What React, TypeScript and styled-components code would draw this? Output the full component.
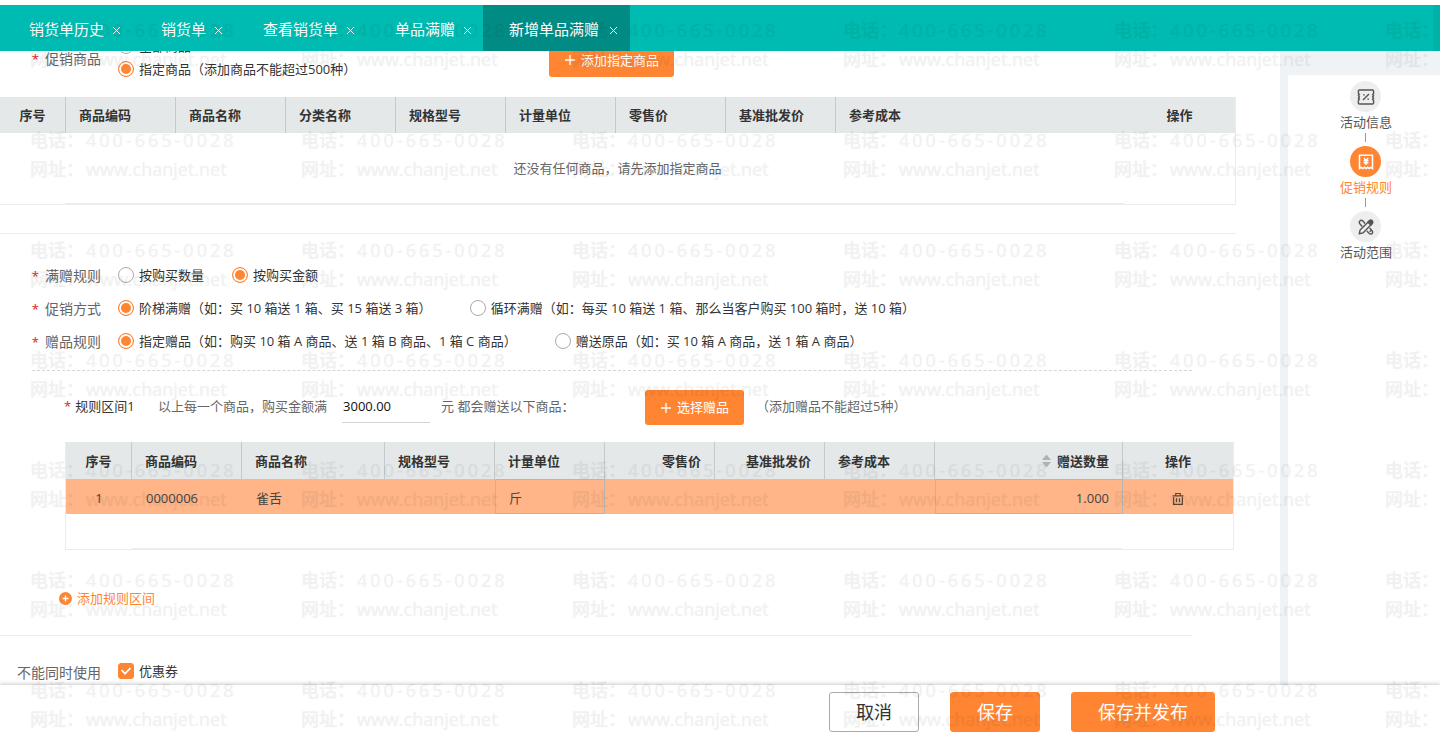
import React, { useState } from 'react';
import styled, { createGlobalStyle, css } from 'styled-components';

const GlobalStyle = createGlobalStyle`
  *, *::before, *::after { box-sizing: border-box; }
  body {
    margin: 0;
    background: #fff;
    color: #333;
    font: 13px/20px "Open Sans", "Noto Sans CJK SC", sans-serif;
  }
  button, input { font: inherit; color: inherit; }
  button { padding: 0; border: 0; background: none; cursor: pointer; }
`;

const orange = '#ff8533';
const line = '#ececec';

const Page = styled.div`
  position: relative;
  display: flex;
  flex-direction: column;
  height: 100vh;
  padding-top: 5px;
  overflow: hidden;
`;

const TabBar = styled.nav`
  display: flex;
  flex: none;
  height: 46px;
  background: #00bbb1;
  border-right: 7px solid #00b1a7;
`;

const Tab = styled.div<{ $active?: boolean }>`
  display: flex;
  align-items: center;
  gap: 8px;
  padding: 2px 11px 0 25px;
  margin-left: 4px;
  color: #fff;
  ${(p) => p.$active && css`
    gap: 10px;
    padding: 2px 12px 0 26px;
    background: #008c84;
    margin-left: 0;
  `}
`;

const TabLink = styled.a`
  color: inherit;
  font-size: 15px;
  text-decoration: none;
  white-space: nowrap;
`;

const CloseButton = styled.button`
  display: flex;
  padding-top: 2px;
`;

const Body = styled.div`
  display: flex;
  flex: 1;
  min-height: 0;
  background: #eff3f6;
`;

const Main = styled.main`
  flex: 1;
  min-width: 0;
  padding-right: 44px;
  margin-right: 8px;
  background: #fff;
  overflow: hidden;
`;

const Side = styled.aside`
  display: flex;
  flex-direction: column;
  align-items: center;
  flex: none;
  width: 152px;
  margin-top: 24px;
  padding: 6px 0 0 4px;
  background: #fff;
`;

const Step = styled.a<{ $active?: boolean }>`
  display: flex;
  flex-direction: column;
  align-items: center;
  color: ${(p) => (p.$active ? orange : '#555')};
  text-decoration: none;
  &:not(:first-child)::before {
    content: '';
    width: 1px;
    height: 9px;
    margin: 1px 0 4px;
    background: #999;
  }
`;

const StepIcon = styled.span<{ $active?: boolean }>`
  display: grid;
  place-items: center;
  width: 31px;
  height: 31px;
  border-radius: 50%;
  background: ${(p) => (p.$active ? orange : '#eee')};
  color: ${(p) => (p.$active ? '#fff' : '#555')};
`;

const AddButton = styled.button<{ $wide?: boolean }>`
  display: flex;
  align-items: center;
  justify-content: center;
  gap: 5px;
  flex: none;
  width: ${(p) => (p.$wide ? 125 : 99)}px;
  height: 35px;
  border-radius: 3px;
  background: ${orange};
  color: #fff;
`;

const GoodsRow = styled.div`
  display: flex;
  align-items: flex-start;
  margin-top: -15px;
  height: 61px;
  ${AddButton} { margin-top: 6px; }
`;

const GoodsOptions = styled.div`
  display: flex;
  flex-direction: column;
  gap: 3px;
  width: 431px;
`;

const FieldName = styled.div<{ $top?: number }>`
  flex: none;
  width: 118px;
  padding-right: 17px;
  padding-top: ${(p) => p.$top ?? 0}px;
  color: #666;
  font-size: 14px;
  text-align: right;
  white-space: nowrap;
`;

const Star = styled.span`
  margin-right: 6px;
  color: #e02020;
  font-size: 13px;
`;

const Field = styled.div`
  display: flex;
  align-items: flex-start;
  height: 33px;
`;

const Option = styled.label<{ $gap?: number }>`
  display: flex;
  align-items: center;
  gap: 5px;
  height: 20px;
  margin-right: ${(p) => p.$gap ?? 28}px;
  white-space: nowrap;
`;

const Radio = styled.input.attrs({ type: 'radio' })`
  appearance: none;
  flex: none;
  width: 16px;
  height: 16px;
  margin: 0;
  border: 1px solid #aaa;
  border-radius: 50%;
  background: #fff;
  &:checked {
    border-color: ${orange};
    background: ${orange};
    box-shadow: inset 0 0 0 2px #fff;
  }
`;

const CheckWrap = styled.span`
  display: grid;
  place-items: center;
  width: 16px;
  height: 16px;
  & > * { grid-area: 1 / 1; }
  svg { pointer-events: none; }
`;

const Checkbox = styled.input.attrs({ type: 'checkbox' })`
  appearance: none;
  width: 16px;
  height: 16px;
  margin: 0;
  border: 1px solid #aaa;
  border-radius: 3px;
  &:checked { border-color: ${orange}; background: ${orange}; }
`;

const Table = styled.table`
  width: 100%;
  table-layout: fixed;
  border-collapse: separate;
  border-spacing: 0;
  border: solid ${line};
  border-width: 0 1px 1px 0;
`;

const HeadCell = styled.th<{ $align?: string; $plain?: boolean }>`
  height: 36px;
  padding: 0 13px;
  background: #e4e8e9;
  border-right: ${(p) => (p.$plain ? 0 : '1px solid #c4c9cb')};
  font-weight: 700;
  text-align: ${(p) => p.$align ?? 'left'};
  white-space: nowrap;
`;

const EmptyCell = styled.td<{ $height: number; $left: number }>`
  height: ${(p) => p.$height}px;
  padding: 0;
  color: #666;
  text-align: center;
  vertical-align: bottom;
  &::after {
    content: '';
    display: block;
    height: 1px;
    margin: 0 111px 0 ${(p) => p.$left}px;
    background: ${line};
  }
`;

const EmptyText = styled.p`
  margin: 0 0 25px;
`;

const GiftCell = styled.td<{ $align?: string; $boxed?: boolean }>`
  height: 35px;
  padding: 2px 14px 0;
  background: #ffb588;
  color: #444;
  text-align: ${(p) => p.$align ?? 'left'};
  ${(p) => p.$boxed && css`box-shadow: inset 0 0 0 1px #b9b4b0;`}
`;

const SortLabel = styled.span`
  display: inline-flex;
  align-items: center;
  gap: 6px;
  vertical-align: top;
`;

const IconButton = styled.button`
  display: inline-flex;
  vertical-align: middle;
`;

const Divider = styled.hr<{ $short?: boolean; $top?: number }>`
  height: 1px;
  margin: ${(p) => p.$top ?? 0}px ${(p) => (p.$short ? 44 : 0)}px 0 0;
  border: 0;
  background: ${line};
`;

const Section = styled.section`
  padding: 31px 0 0;
`;

const RuleBlock = styled.div`
  margin: 6px 44px 0 32px;
  border-top: 1px dashed #d5d5d5;
`;

const RuleLine = styled.div`
  display: flex;
  align-items: flex-start;
  height: 35px;
  margin: 19px 0 17px 32px;
  color: #666;
  line-height: 33px;
  white-space: nowrap;
`;

const RuleName = styled.span`
  width: 94px;
  color: #333;
  ${Star} { margin-right: 4px; }
`;

const AmountInput = styled.input`
  width: 88px;
  height: 33px;
  margin: 0 11px 0 15px;
  padding: 0 1px;
  border: 0;
  border-bottom: 1px solid #d5d5d5;
  background: none;
  color: #111;
`;

const Unit = styled.span`
  width: 204px;
`;

const Note = styled.span`
  margin-left: 12px;
`;

const GiftTable = styled.div`
  margin: 0 2px 0 65px;
  ${Table} { border-left-width: 1px; }
  ${HeadCell} { height: 37px; }
`;

const AddRule = styled.button`
  display: flex;
  align-items: center;
  gap: 5px;
  margin: 38px 0 27px 59px;
  color: ${orange};
`;

const Exclusive = styled(Field)`
  padding-top: 25px;
`;

const Footer = styled.footer`
  display: flex;
  justify-content: flex-end;
  gap: 31px;
  flex: none;
  height: 51px;
  padding: 7px 225px 0 0;
  background: #fff;
  box-shadow: 0 -1px 4px rgba(0, 0, 0, 0.22);
  z-index: 1;
`;

const ActionButton = styled.button<{ $primary?: boolean }>`
  height: 40px;
  padding: 0 26px;
  border: 1px solid ${(p) => (p.$primary ? orange : '#aaa')};
  border-radius: 3px;
  background: ${(p) => (p.$primary ? orange : '#fff')};
  color: ${(p) => (p.$primary ? '#fff' : '#333')};
  font-size: 18px;
`;

const Watermark = styled.div`
  position: absolute;
  inset: 0;
  z-index: 2;
  display: grid;
  grid-template-columns: repeat(auto-fill, 271px);
  grid-auto-rows: 110px;
  width: calc(100% + 271px);
  padding: 16px 0 0 30px;
  color: #000;
  opacity: 0.05;
  text-shadow: 0 0 1px #000;
  font-size: 18px;
  line-height: 29px;
  font-weight: 500;
  white-space: nowrap;
  pointer-events: none;
  user-select: none;
`;

const ContactLine = styled.div<{ $spaced?: boolean }>`
  display: flex;
  gap: 2px;
  span:last-child { letter-spacing: ${(p) => (p.$spaced ? 3 : 0)}px; }
`;

const Close = () => (
  <svg width="9" height="9" viewBox="0 0 9 9" fill="none" stroke="#fff" strokeWidth="1">
    <path d="M1 1l7 7M8 1L1 8" />
  </svg>
);

const Plus = () => (
  <svg width="12" height="12" viewBox="0 0 12 12" fill="none" stroke="#fff" strokeWidth="1.3">
    <path d="M6 1v10M1 6h10" />
  </svg>
);

const TicketIcon = () => (
  <svg width="18" height="16" viewBox="0 0 18 16" fill="none" stroke="currentColor" strokeWidth="1.4">
    <path d="M2.4 1h13.2q1 0 1 1v2.6l-1 1 1 1.2-1 1.2 1 1.2-1 1.2 1 1V14q0 1-1 1H2.4q-1 0-1-1v-2.8l1-1-1-1.2 1-1.2-1-1.2 1-1.2-1-1V2q0-1 1-1z" />
    <path d="M6 11l6-6" />
    <path d="M6.2 5.2h1.6v1.4H6.2zM10.4 9.4h1.6v1.4h-1.6z" fill="currentColor" stroke="none" />
  </svg>
);

const ReceiptIcon = () => (
  <svg width="16" height="16" viewBox="0 0 16 16" fill="none" stroke="currentColor" strokeWidth="1.5">
    <path d="M1.5 14.5V1.2h13v13.3l-1.6-1.2-1.6 1.2-1.7-1.2L8 14.5l-1.6-1.2-1.7 1.2-1.6-1.2z" />
    <path d="M5.8 4L8 6.4 10.2 4M8 6.4V11M5.6 6.8h4.8M5.6 8.8h4.8" strokeWidth="1.4" />
  </svg>
);

const ToolsIcon = () => (
  <svg width="16" height="16" viewBox="0 0 16 16" fill="none" stroke="currentColor" strokeWidth="1.4" strokeLinejoin="round">
    <path d="M1.2 14.8l.9-3.7L11.4 1.8l2.9 2.8-9.3 9.3z" />
    <path d="M10 3.2L11.7 1.4q1.3-.9 2.5.3 1.1 1.3.3 2.5L12.8 6z" fill="currentColor" />
    <path d="M7 4.6L5 2Q3.2.6 1.8 2 .6 3.4 2 5l2.2 2.5M11.6 9.1l2.6 2.8q1 1.6-.2 2.7-1.5 1-2.7-.1l-2.5-2.6M12.9 11.5l-1.2 1.2" />
  </svg>
);

const TrashIcon = () => (
  <svg width="12" height="14" viewBox="0 0 12 14" fill="none" stroke="#5c4638" strokeWidth="1.2">
    <path d="M.5 3.8h11M3.7 3.6V1.5h4.6v2.1M1.6 5v7.4h8.8V5M4.5 6.3v4M7.5 6.3v4" />
  </svg>
);

const SortIcon = () => (
  <svg width="9" height="14" viewBox="0 0 9 14" fill="#aeb2b3">
    <path d="M0 6l4.5-5.5L9 6zM0 8h9l-4.5 5.5z" />
  </svg>
);

const AddCircle = () => (
  <svg width="13" height="13" viewBox="0 0 13 13">
    <circle cx="6.5" cy="6.5" r="6.5" fill={orange} />
    <path d="M6.5 3.5v6M3.5 6.5h6" stroke="#fff" strokeWidth="1.3" />
  </svg>
);

const Tick = () => (
  <svg width="12" height="12" viewBox="0 0 12 12" fill="none" stroke="#fff" strokeWidth="1.8">
    <path d="M1.5 5l3.5 3.7L10.5 3" />
  </svg>
);

const tabs = ['销货单历史', '销货单', '查看销货单', '单品满赠', '新增单品满赠'];

type Column = { name: string; width?: number; align?: string; plain?: boolean; sort?: boolean };

const goodsColumns: Column[] = [
  { name: '序号', width: 66, align: 'center' },
  { name: '商品编码', width: 110 },
  { name: '商品名称', width: 110 },
  { name: '分类名称', width: 110 },
  { name: '规格型号', width: 110 },
  { name: '计量单位', width: 110 },
  { name: '零售价', width: 110 },
  { name: '基准批发价', width: 110 },
  { name: '参考成本', plain: true },
  { name: '操作', width: 111, align: 'center', plain: true },
];

const giftColumns: Column[] = [
  { name: '序号', width: 66, align: 'center' },
  { name: '商品编码', width: 110 },
  { name: '商品名称', width: 143 },
  { name: '规格型号', width: 110 },
  { name: '计量单位', width: 110 },
  { name: '零售价', width: 110, align: 'right' },
  { name: '基准批发价', width: 110, align: 'right' },
  { name: '参考成本', width: 110 },
  { name: '赠送数量', align: 'right', sort: true },
  { name: '操作', width: 110, align: 'center', plain: true },
];

const TableHead = ({ columns }: { columns: Column[] }) => (
  <>
    <colgroup>
      {columns.map((c) => <col key={c.name} width={c.width} />)}
    </colgroup>
    <thead>
      <tr>
        {columns.map((c) => (
          <HeadCell key={c.name} $align={c.align} $plain={c.plain}>
            {c.sort ? <SortLabel><SortIcon />{c.name}</SortLabel> : c.name}
          </HeadCell>
        ))}
      </tr>
    </thead>
  </>
);

type ChoiceProps = { name: string; options: string[]; initial: number; gap?: number };

const choices: ChoiceProps[] = [
  { name: '满赠规则', options: ['按购买数量', '按购买金额'], initial: 1 },
  {
    name: '促销方式',
    options: [
      '阶梯满赠（如：买 10 箱送 1 箱、买 15 箱送 3 箱）',
      '循环满赠（如：每买 10 箱送 1 箱、那么当客户购买 100 箱时，送 10 箱）',
    ],
    initial: 0,
    gap: 38,
  },
  {
    name: '赠品规则',
    options: [
      '指定赠品（如：购买 10 箱 A 商品、送 1 箱 B 商品、1 箱 C 商品）',
      '赠送原品（如：买 10 箱 A 商品，送 1 箱 A 商品）',
    ],
    initial: 0,
    gap: 38,
  },
];

const Choice = ({ name, options, initial, gap }: ChoiceProps) => {
  const [value, setValue] = useState(initial);
  return (
    <Field role="radiogroup" aria-label={name}>
      <FieldName $top={1}><Star>*</Star>{name}</FieldName>
      {options.map((text, i) => (
        <Option key={text} $gap={gap}>
          <Radio name={name} checked={value === i} onChange={() => setValue(i)} />
          {text}
        </Option>
      ))}
    </Field>
  );
};

export default function App() {
  return (
    <Page>
      <GlobalStyle />
      <TabBar>
        {tabs.map((t, i) => (
          <Tab key={t} $active={i === tabs.length - 1}>
            <TabLink href="#">{t}</TabLink>
            <CloseButton aria-label={`关闭${t}`}><Close /></CloseButton>
          </Tab>
        ))}
      </TabBar>
      <Body>
        <Main>
          <GoodsRow>
            <FieldName $top={13}><Star>*</Star>促销商品</FieldName>
            <GoodsOptions>
              <Option><Radio name="goods" />全部商品</Option>
              <Option><Radio name="goods" defaultChecked />指定商品（添加商品不能超过500种）</Option>
            </GoodsOptions>
            <AddButton $wide><Plus />添加指定商品</AddButton>
          </GoodsRow>
          <Table>
            <TableHead columns={goodsColumns} />
            <tbody>
              <tr>
                <EmptyCell colSpan={10} $height={71} $left={65}>
                  <EmptyText>还没有任何商品，请先添加指定商品</EmptyText>
                </EmptyCell>
              </tr>
            </tbody>
          </Table>
          <Divider $top={28} />
          <Section>
            {choices.map((c) => <Choice key={c.name} {...c} />)}
            <RuleBlock>
              <RuleLine>
                <RuleName><Star>*</Star>规则区间1</RuleName>
                <label htmlFor="amount">以上每一个商品，购买金额满</label>
                <AmountInput id="amount" defaultValue="3000.00" />
                <Unit>元 都会赠送以下商品：</Unit>
                <AddButton><Plus />选择赠品</AddButton>
                <Note>（添加赠品不能超过5种）</Note>
              </RuleLine>
            </RuleBlock>
            <GiftTable>
              <Table>
                <TableHead columns={giftColumns} />
                <tbody>
                  <tr>
                    <GiftCell $align="center">1</GiftCell>
                    <GiftCell>0000006</GiftCell>
                    <GiftCell>雀舌</GiftCell>
                    <GiftCell />
                    <GiftCell $boxed>斤</GiftCell>
                    <GiftCell />
                    <GiftCell />
                    <GiftCell />
                    <GiftCell $boxed $align="right">1.000</GiftCell>
                    <GiftCell $align="center">
                      <IconButton aria-label="删除"><TrashIcon /></IconButton>
                    </GiftCell>
                  </tr>
                  <tr><EmptyCell colSpan={10} $height={35} $left={66} /></tr>
                </tbody>
              </Table>
            </GiftTable>
            <AddRule><AddCircle />添加规则区间</AddRule>
          </Section>
          <Divider $short />
          <Exclusive>
            <FieldName $top={2}>不能同时使用</FieldName>
            <Option>
              <CheckWrap><Checkbox defaultChecked /><Tick /></CheckWrap>
              优惠券
            </Option>
          </Exclusive>
        </Main>
        <Side>
          <Step href="#"><StepIcon><TicketIcon /></StepIcon>活动信息</Step>
          <Step href="#" $active><StepIcon $active><ReceiptIcon /></StepIcon>促销规则</Step>
          <Step href="#"><StepIcon><ToolsIcon /></StepIcon>活动范围</Step>
        </Side>
      </Body>
      <Footer>
        <ActionButton>取消</ActionButton>
        <ActionButton $primary>保存</ActionButton>
        <ActionButton $primary>保存并发布</ActionButton>
      </Footer>
      <Watermark aria-hidden="true">
        {Array.from({ length: 42 }, (_, i) => (
          <div key={i}>
            <ContactLine $spaced><span>电话：</span><span>400-665-0028</span></ContactLine>
            <ContactLine><span>网址：</span><span>www.chanjet.net</span></ContactLine>
          </div>
        ))}
      </Watermark>
    </Page>
  );
}
